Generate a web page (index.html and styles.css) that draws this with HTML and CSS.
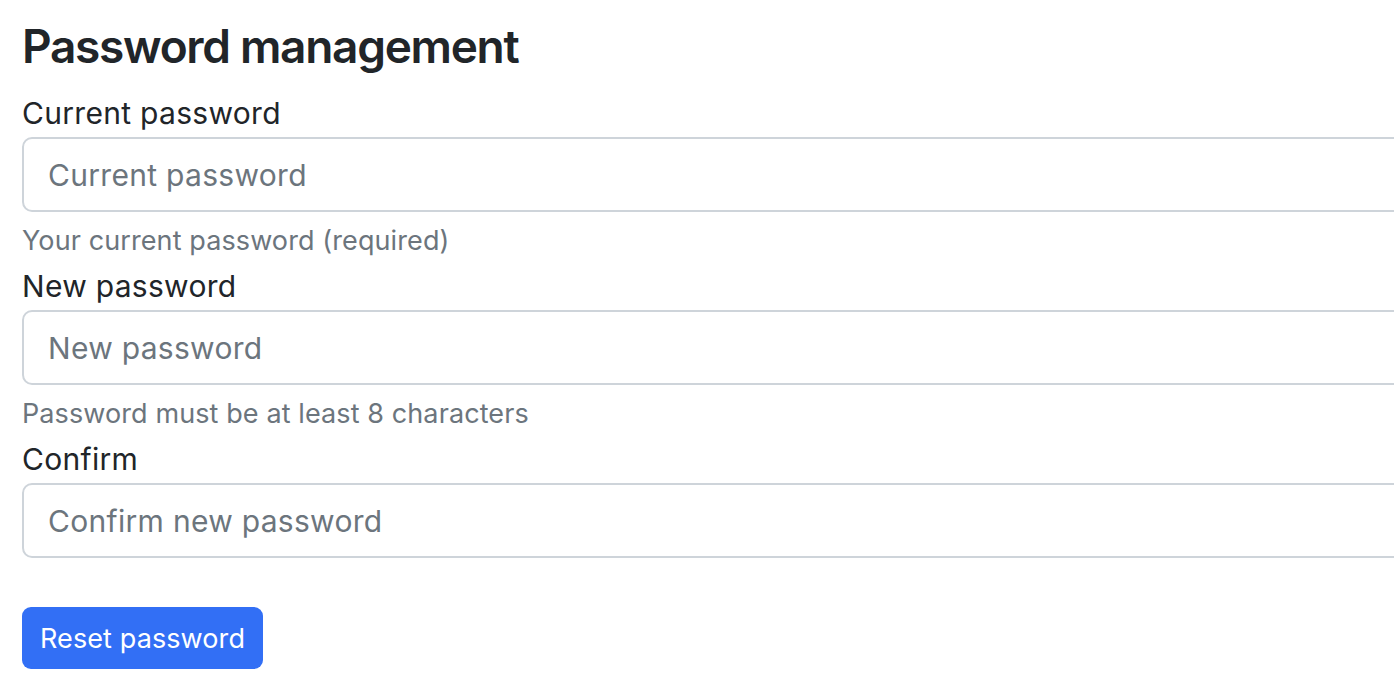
FILE: index.html
```html
<!DOCTYPE html>
<html lang="en">
<head>
<meta charset="utf-8">
<title>Password management</title>
<link rel="stylesheet" href="styles.css">
</head>
<body>
<main class="page">
  <h3 class="title">Password management</h3>
  <form class="form">
    <div class="field">
      <label class="label" for="current">Current password</label>
      <input class="input" id="current" type="password" placeholder="Current password">
      <div class="help">Your current password (required)</div>
    </div>
    <div class="field">
      <label class="label" for="new">New password</label>
      <input class="input" id="new" type="password" placeholder="New password">
      <div class="help">Password must be at least 8 characters</div>
    </div>
    <div class="field">
      <label class="label" for="confirm">Confirm</label>
      <input class="input" id="confirm" type="password" placeholder="Confirm new password">
    </div>
    <button class="btn" type="button">Reset password</button>
  </form>
</main>
</body>
</html>
```
FILE: styles.css
```css
* { box-sizing: border-box; }
html, body { margin: 0; padding: 0; background: #fff; }
body {
  font-family: Inter, "Liberation Sans", Arial, sans-serif;
  color: #212529;
  overflow: hidden;
}
.page {
  padding: 19px 0 0 22px;
}
.title {
  margin: 0 0 19px 0;
  font-size: 46px;
  line-height: 55px;
  font-weight: 600;
  letter-spacing: -1.3px;
  color: #212529;
}
.form {
  display: flex;
  flex-direction: column;
}
.field {
  display: flex;
  flex-direction: column;
  margin-bottom: 7px;
}
.label {
  font-size: 30px;
  line-height: 40px;
  letter-spacing: 0.3px;
  margin-bottom: 4px;
}
.input {
  width: 1400px;
  height: 75px;
  border: 2px solid #ced4da;
  border-radius: 10px;
  padding: 0 24px;
  font-family: inherit;
  font-size: 30px;
  letter-spacing: 0.3px;
  color: #212529;
  background: #fff;
  outline: none;
}
.input::placeholder { color: #6c757d; opacity: 1; }
.help {
  margin-top: 11px;
  font-size: 27px;
  line-height: 36px;
  letter-spacing: 0.1px;
  color: #6c757d;
}
.btn {
  align-self: flex-start;
  margin-top: 42px;
  height: 62px;
  padding: 0 18px;
  border: none;
  border-radius: 9px;
  background: #326ff5;
  color: #fff;
  font-family: inherit;
  font-size: 27px;
  letter-spacing: 0.1px;
  cursor: pointer;
}
```
